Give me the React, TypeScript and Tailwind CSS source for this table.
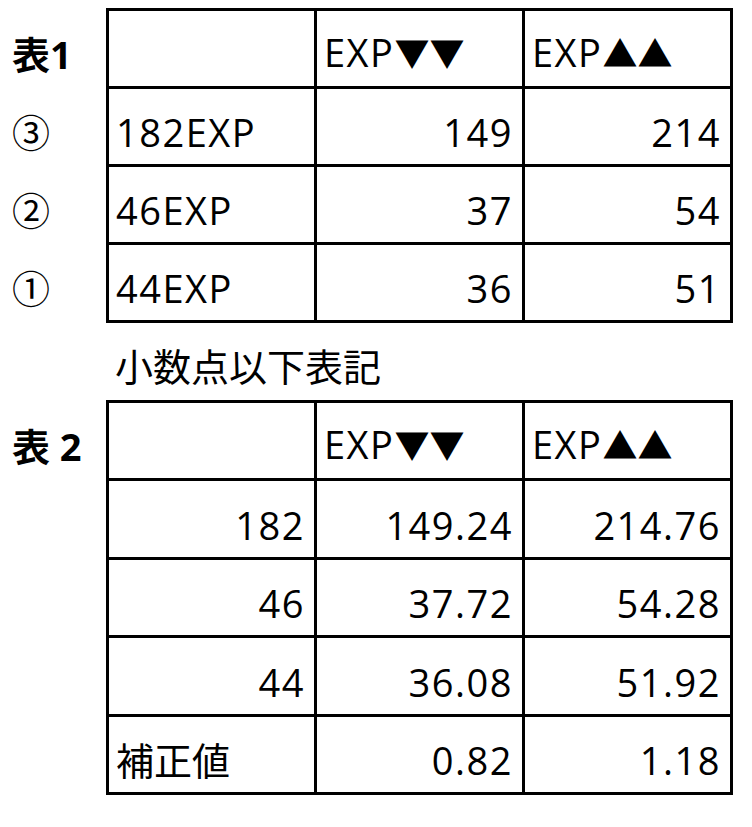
import React from "react";

type Cell = { t: React.ReactNode; r?: boolean; cjk?: boolean };
type Row = { label: string; bold?: boolean; h: string; cells: Cell[] };

const FONT = "font-['Open_Sans','Noto_Sans_CJK_JP',sans-serif]";

function Block({ rows }: { rows: Row[] }) {
  return (
    <div className="flex">
      <div className="flex w-[106px] flex-col gap-[3px] pt-[3px]">
        {rows.map((row, i) => (
          <div
            key={i}
            className={`${row.h} flex items-end pb-[13px] pl-[12px] leading-[38px] ${row.bold ? "font-bold" : ""}`}
          >
            {row.label}
          </div>
        ))}
      </div>
      <div className="grid grid-cols-[205px_205px_205px] gap-[3px] bg-black p-[3px]">
        {rows.map((row, i) =>
          row.cells.map((c, j) => (
            <div
              key={`${i}-${j}`}
              className={`${row.h} flex items-end bg-white pb-[13px] leading-[38px] ${
                c.cjk ? "tracking-normal" : "tracking-[1.5px]"
              } ${c.r ? "justify-end pr-[9px]" : "justify-start pl-[7px]"}`}
            >
              {c.t}
            </div>
          ))
        )}
      </div>
    </div>
  );
}

const H1: Cell[] = [
  { t: "" },
  {
    t: (
      <span>
        EXP<span className="text-[35px] tracking-normal">▼▼</span>
      </span>
    ),
  },
  {
    t: (
      <span>
        EXP<span className="text-[35px] tracking-normal">▲▲</span>
      </span>
    ),
  },
];

const table1: Row[] = [
  { label: "表1", bold: true, h: "h-[75px]", cells: H1 },
  { label: "③", h: "h-[75px]", cells: [{ t: "182EXP" }, { t: "149", r: true }, { t: "214", r: true }] },
  { label: "②", h: "h-[75px]", cells: [{ t: "46EXP" }, { t: "37", r: true }, { t: "54", r: true }] },
  { label: "①", h: "h-[75px]", cells: [{ t: "44EXP" }, { t: "36", r: true }, { t: "51", r: true }] },
];

const table2: Row[] = [
  { label: "表 2", bold: true, h: "h-[75px]", cells: H1 },
  { label: "", h: "h-[76px]", cells: [{ t: "182", r: true }, { t: "149.24", r: true }, { t: "214.76", r: true }] },
  { label: "", h: "h-[75px]", cells: [{ t: "46", r: true }, { t: "37.72", r: true }, { t: "54.28", r: true }] },
  { label: "", h: "h-[76px]", cells: [{ t: "44", r: true }, { t: "36.08", r: true }, { t: "51.92", r: true }] },
  { label: "", h: "h-[75px]", cells: [{ t: "補正値", cjk: true }, { t: "0.82", r: true }, { t: "1.18", r: true }] },
];

export default function App() {
  return (
    <div className={`h-[827px] w-[752px] bg-white pt-[8px] text-[38px] text-black ${FONT}`}>
      <Block rows={table1} />
      <div className="flex h-[77px] items-center pl-[115px] pt-[8px] leading-[38px]">小数点以下表記</div>
      <Block rows={table2} />
    </div>
  );
}
